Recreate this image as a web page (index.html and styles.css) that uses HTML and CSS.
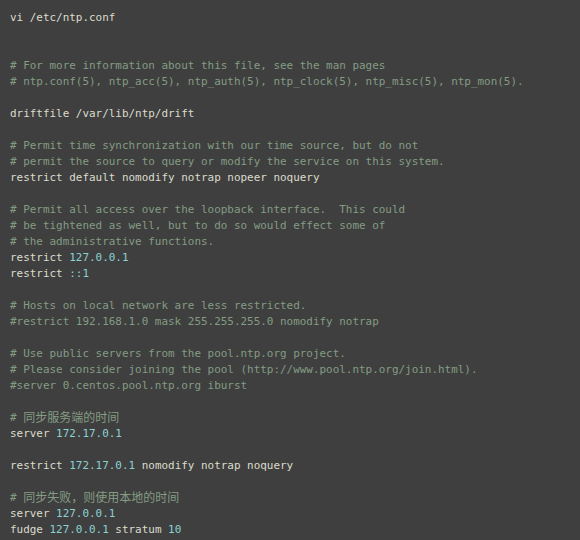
FILE: index.html
```html
<!DOCTYPE html>
<html lang="zh">
<head>
<meta charset="utf-8">
<title>ntp.conf</title>
<link rel="stylesheet" href="styles.css">
</head>
<body>
<pre class="code">vi /etc/ntp.conf


<span class="c"># For more information about this file, see the man pages</span>
<span class="c"># ntp.conf(5), ntp_acc(5), ntp_auth(5), ntp_clock(5), ntp_misc(5), ntp_mon(5).</span>

driftfile /var/lib/ntp/drift

<span class="c"># Permit time synchronization with our time source, but do not</span>
<span class="c"># permit the source to query or modify the service on this system.</span>
restrict default nomodify notrap nopeer noquery

<span class="c"># Permit all access over the loopback interface.  This could</span>
<span class="c"># be tightened as well, but to do so would effect some of</span>
<span class="c"># the administrative functions.</span>
restrict <span class="n">127.0.0.1</span>
restrict <span class="n">::1</span>

<span class="c"># Hosts on local network are less restricted.</span>
<span class="c">#restrict 192.168.1.0 mask 255.255.255.0 nomodify notrap</span>

<span class="c"># Use public servers from the pool.ntp.org project.</span>
<span class="c"># Please consider joining the pool (http://www.pool.ntp.org/join.html).</span>
<span class="c">#server 0.centos.pool.ntp.org iburst</span>

<span class="c"># <span class="cjk">同步服务端的时间</span></span>
server <span class="n">172.17.0.1</span>

restrict <span class="n">172.17.0.1</span> nomodify notrap noquery

<span class="c"># <span class="cjk">同步失败，则使用本地的时间</span></span>
server <span class="n">127.0.0.1</span>
fudge <span class="n">127.0.0.1</span> stratum <span class="n">10</span>
</pre>
</body>
</html>
```

FILE: styles.css
```css
html, body {
  margin: 0;
  padding: 0;
  background: #3f3f3f;
}

.code {
  margin: 0;
  padding: 10px 10px 20px;
  background: #3f3f3f;
  color: #dcdccc;
  font-family: "DejaVu Sans Mono", "Liberation Mono", monospace;
  font-size: 10.95px;
  line-height: 16px;
  white-space: pre;
}

.c {
  color: #849c84;
}

.n {
  color: #8cd0d3;
}

.cjk {
  font-family: "Noto Sans CJK SC", sans-serif;
  font-size: 12px;
  line-height: 0;
  vertical-align: -1px;
}
```
